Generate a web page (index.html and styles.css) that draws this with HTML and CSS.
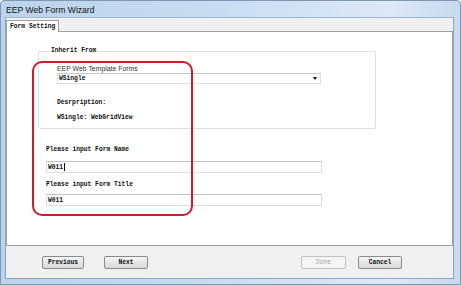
FILE: index.html
```html
<!DOCTYPE html>
<html>
<head>
<meta charset="utf-8">
<link rel="stylesheet" href="styles.css">
</head>
<body>
<div class="window">
  <div class="titlebar"><span class="title">EEP Web Form Wizard</span></div>
  <div class="client">
    <div class="tabstrip">
      <div class="tab">Form Setting</div>
    </div>
    <div class="tabpage">
      <div class="group">
        <span class="legend">Inherit From</span>
        <div class="combo-label">EEP Web Template Forms</div>
        <div class="combo"><span class="mono">WSingle</span><span class="arrow"></span></div>
        <div class="mono desc-label">Desrpription:</div>
        <div class="mono desc-value">WSingle: WebGridView</div>
      </div>
      <div class="mono field-label name-label">Please input Form Name</div>
      <div class="textbox"><span class="mono">W011</span><span class="caret"></span></div>
      <div class="mono field-label title-label">Please input Form Title</div>
      <div class="textbox textbox-title"><span class="mono">W011</span></div>
      <div class="highlight"></div>
    </div>
    <div class="footer">
      <div class="btn btn-prev">Previous</div>
      <div class="btn btn-next">Next</div>
      <div class="spacer"></div>
      <div class="btn btn-done disabled">Done</div>
      <div class="btn btn-cancel">Cancel</div>
    </div>
  </div>
</div>
</body>
</html>
```
FILE: styles.css
```css
html, body {
  margin: 0;
  padding: 0;
  width: 461px;
  height: 285px;
  overflow: hidden;
  background: #ffffff;
}
.window {
  width: 461px;
  height: 285px;
  box-sizing: border-box;
  display: flex;
  flex-direction: column;
  background: linear-gradient(90deg, #bcd3ec 0%, #c8dcf1 45%, #dde9f6 85%, #c6d9ee 100%);
  padding: 0 6px 5px 4px;
  border: 1px solid #8096b2;
  border-radius: 4px 4px 0 0;
}
.titlebar {
  height: 16px;
  display: flex;
  align-items: center;
  flex: none;
}
.title {
  font-family: "Liberation Sans", Arial, sans-serif;
  font-size: 8.6px;
  color: #111;
  margin-left: 1px;
  margin-top: 1px;
}
.client {
  flex: 1;
  display: flex;
  flex-direction: column;
  background: #f0f0f0;
  border: 1px solid #8fa6c0;
  border-top-color: #a3b8cf;
  position: relative;
}
.mono {
  font-family: "Liberation Mono", "DejaVu Sans Mono", monospace;
  font-size: 6.3px;
  color: #111;
  font-weight: bold;
}
.tabstrip {
  height: 13px;
  flex: none;
  display: flex;
  align-items: flex-end;
  background: #f0f0f0;
}
.tab {
  height: 12px;
  width: 53px;
  box-sizing: border-box;
  background: #ffffff;
  border: 1px solid #a0a0a0;
  border-bottom: none;
  margin-bottom: -1px;
  position: relative;
  z-index: 1;
  font-family: "Liberation Mono", monospace;
  font-weight: bold;
  font-size: 6.3px;
  color: #111;
  padding: 2px 0 0 3px;
}
.tabpage {
  flex: 1;
  background: #ffffff;
  border: 1px solid #a0a0a0;
  position: relative;
}
.group {
  margin: 19px 0 0 31px;
  width: 338px;
  height: 78px;
  box-sizing: border-box;
  border: 1px solid #e0e0e0;
  border-radius: 2px;
  padding: 0 0 0 18px;
  display: flex;
  flex-direction: column;
  align-items: flex-start;
}
.legend {
  font-family: "Liberation Mono", monospace;
  font-weight: bold;
  font-size: 6.3px;
  line-height: 8px;
  color: #111;
  background: #ffffff;
  padding: 0 1px;
  margin: -5px 0 0 -7px;
}
.combo-label {
  font-family: "Liberation Sans", Arial, sans-serif;
  font-size: 6.9px;
  color: #333333;
  margin-top: 10px;
  line-height: 8px;
}
.combo {
  width: 264px;
  height: 11px;
  box-sizing: border-box;
  border: 1px solid #dedede;
  border-top-color: #c8c8c8;
  display: flex;
  align-items: center;
  justify-content: space-between;
  padding: 0 3px 0 1px;
}
.arrow {
  width: 0;
  height: 0;
  border-left: 2.5px solid transparent;
  border-right: 2.5px solid transparent;
  border-top: 3px solid #111;
}
.desc-label {
  margin-top: 15px;
  line-height: 8px;
}
.desc-value {
  margin-top: 7px;
  line-height: 8px;
}
.field-label {
  margin-left: 39px;
  line-height: 8px;
}
.name-label {
  margin-top: 17px;
}
.title-label {
  margin-top: 8px;
}
.textbox {
  margin: 7px 0 0 39px;
  width: 276px;
  height: 12px;
  box-sizing: border-box;
  border: 1px solid #dedede;
  border-top-color: #c4c4c4;
  display: flex;
  align-items: center;
  padding-left: 1px;
}
.textbox-title {
  margin-top: 5px;
}
.caret {
  width: 1px;
  height: 8px;
  background: #111;
  margin-left: 0.5px;
}
.highlight {
  position: absolute;
  left: 25px;
  top: 29px;
  width: 161px;
  height: 155px;
  box-sizing: border-box;
  border: 2px solid #d11a2a;
  border-radius: 10px;
}
.footer {
  height: 32px;
  flex: none;
  display: flex;
  align-items: center;
  padding: 0 51px 0 36px;
}
.btn {
  height: 13px;
  box-sizing: border-box;
  border: 1px solid #8a8a8a;
  border-radius: 2px;
  background: linear-gradient(#f6f6f6, #e6e6e6 50%, #d8d8d8);
  font-family: "Liberation Mono", monospace;
  font-weight: bold;
  font-size: 6.3px;
  color: #111;
  display: flex;
  align-items: center;
  justify-content: center;
}
.btn-prev { width: 42px; }
.btn-next { width: 44px; margin-left: 20px; }
.spacer { flex: 1; }
.btn-done { width: 45px; }
.btn-cancel { width: 44px; margin-left: 12px; }
.disabled {
  color: #a8a8a8;
  border-color: #c2c2c2;
  background: #f4f4f4;
  font-weight: normal;
}
```
